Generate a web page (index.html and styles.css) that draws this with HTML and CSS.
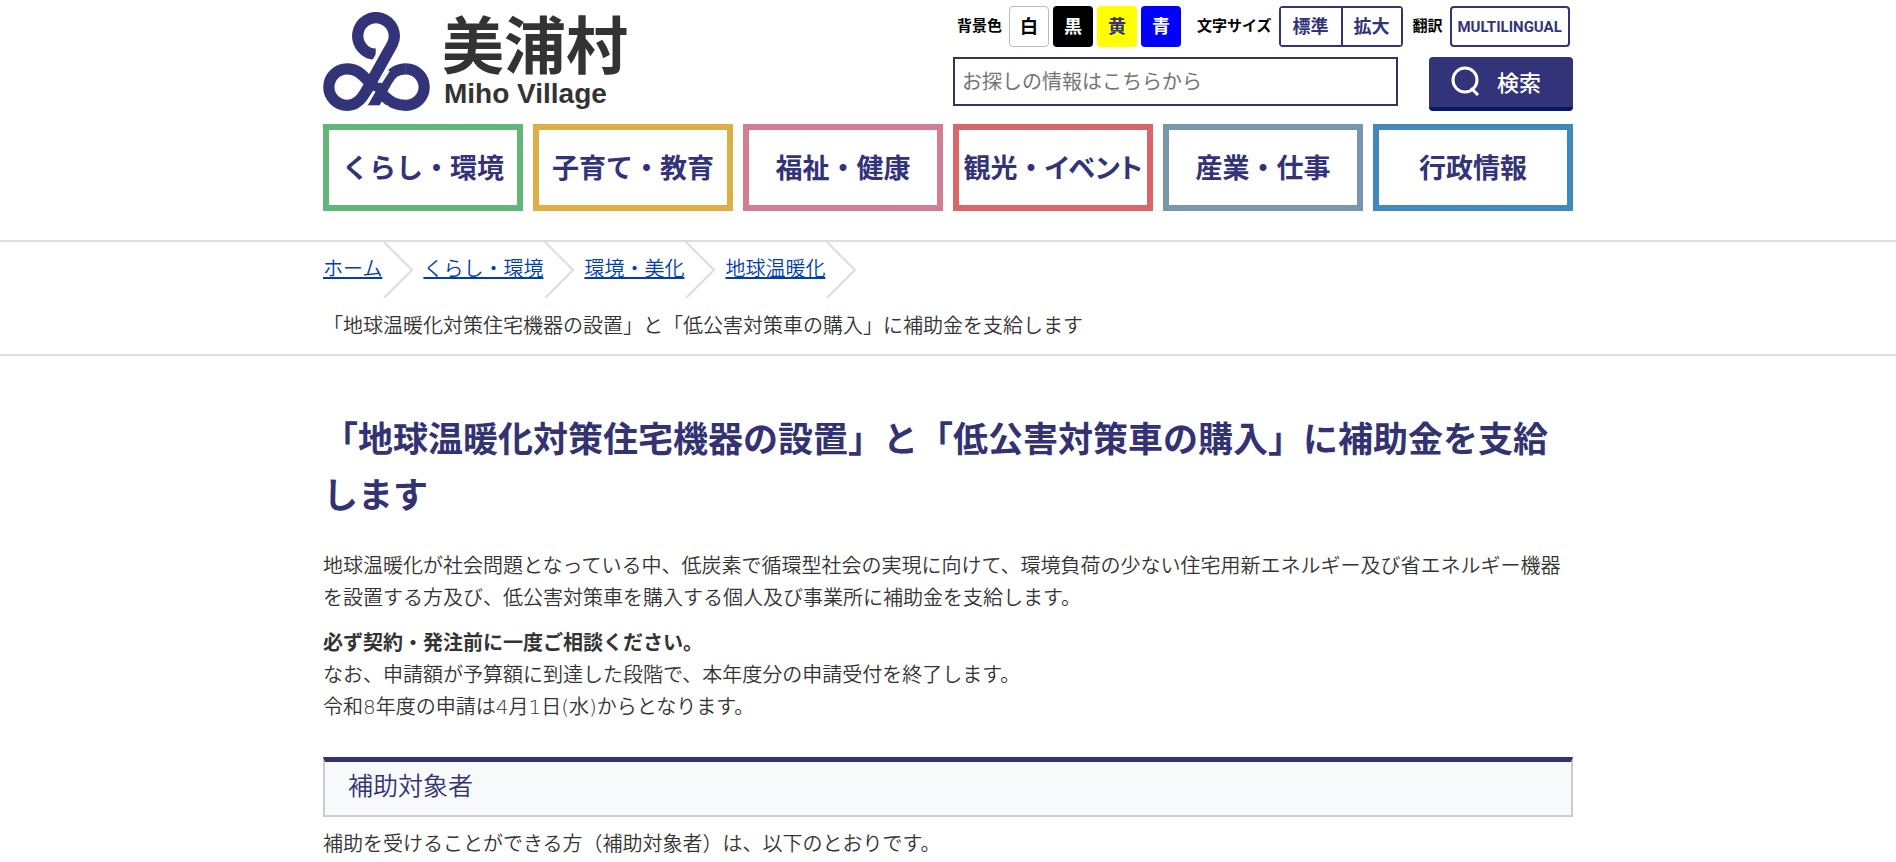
FILE: index.html
```html
<!DOCTYPE html>
<html lang="ja">
<head>
<meta charset="utf-8">
<meta name="viewport" content="width=device-width, initial-scale=1">
<title>「地球温暖化対策住宅機器の設置」と「低公害対策車の購入」に補助金を支給します | 美浦村</title>
<link rel="stylesheet" href="styles.css">
</head>
<body>
<header class="header wrap">
  <div class="header-top">
    <a class="logo" href="#">
      <svg class="logo-mark" viewBox="9 11 321 298" aria-hidden="true">
        <g fill="none" stroke-width="34">
          <path stroke="#33337a" d="M258 182C228 182 214 196 202 216L155 300"/>
          <path stroke="#fff" stroke-width="50" d="M207 122L140 240"/>
          <path stroke="#33337a" d="M167 138A55 55 0 1 1 217 108Q212 118 207 126L141 244C125 272 110 292 81 292A55 55 0 0 1 81 182C112 182 128 202 142 216L190 262C210 282 228 292 258 292A55 55 0 0 0 258 182"/>
          <path stroke="#fff" stroke-width="8" d="M183 119L160 159M206 187L182 224M163 249L140 290"/>
        </g>
        <path fill="#fff" d="M125 292H205V312H125Z"/>
      </svg>
      <span class="logo-text">
        <span class="logo-ja">美浦村</span>
        <span class="logo-en">Miho Village</span>
      </span>
    </a>
    <div class="tools">
      <div class="tool-row">
        <div class="tool-group colors">
          <span class="tool-label">背景色</span>
          <button class="swatch white" type="button">白</button>
          <button class="swatch black" type="button">黒</button>
          <button class="swatch yellow" type="button">黄</button>
          <button class="swatch blue" type="button">青</button>
        </div>
        <div class="tool-group">
          <span class="tool-label">文字サイズ</span>
          <div class="size-switch">
            <button class="size" type="button">標準</button>
            <button class="size" type="button">拡大</button>
          </div>
        </div>
        <div class="tool-group">
          <span class="tool-label">翻訳</span>
          <button class="lang" type="button">MULTILINGUAL</button>
        </div>
      </div>
      <form class="search">
        <input class="search-box" type="text" aria-label="サイト内検索" placeholder="お探しの情報はこちらから">
        <button class="search-button" type="button">
          <svg class="search-icon" viewBox="0 0 30 32" aria-hidden="true"><g fill="none" stroke="#fff" stroke-width="3"><circle cx="14" cy="15" r="12"/><path d="M20 23l7 7"/></g></svg>
          <span>検索</span>
        </button>
      </form>
    </div>
  </div>
  <nav class="nav">
    <a class="nav-item green" href="#">くらし・環境</a>
    <a class="nav-item gold" href="#">子育て・教育</a>
    <a class="nav-item pink" href="#">福祉・健康</a>
    <a class="nav-item red" href="#">観光・<span class="kana">イベント</span></a>
    <a class="nav-item slate" href="#">産業・仕事</a>
    <a class="nav-item sky" href="#">行政情報</a>
  </nav>
</header>
<div class="crumbs">
  <div class="wrap">
    <ol class="crumb-list">
      <li class="crumb"><a href="#">ホーム</a><svg class="arrow" viewBox="0 0 31 56" aria-hidden="true"><path d="M2 0l28 28L2 56"/></svg></li>
      <li class="crumb"><a href="#">くらし・環境</a><svg class="arrow" viewBox="0 0 31 56" aria-hidden="true"><path d="M2 0l28 28L2 56"/></svg></li>
      <li class="crumb"><a href="#">環境・美化</a><svg class="arrow" viewBox="0 0 31 56" aria-hidden="true"><path d="M2 0l28 28L2 56"/></svg></li>
      <li class="crumb"><a href="#">地球温暖化</a><svg class="arrow" viewBox="0 0 31 56" aria-hidden="true"><path d="M2 0l28 28L2 56"/></svg></li>
    </ol>
    <p class="current">「地球温暖化対策住宅機器の設置」と「低公害対策車の購入」に補助金を支給します</p>
  </div>
</div>
<main class="main wrap">
  <h1 class="title">「地球温暖化対策住宅機器の設置」と「低公害対策車の購入」に補助金を支給します</h1>
  <p class="text">地球温暖化が社会問題となっている中、低炭素で循環型社会の実現に向けて、環境負荷の少ない住宅用新エネルギー及び省エネルギー機器を設置する方及び、低公害対策車を購入する個人及び事業所に補助金を支給します。</p>
  <p class="text"><strong>必ず契約・発注前に一度ご相談ください。</strong><br>なお、申請額が予算額に到達した段階で、本年度分の申請受付を終了します。<br>令和8年度の申請は4月1日(水)からとなります。</p>
  <h2 class="section">補助対象者</h2>
  <p class="text">補助を受けることができる方（補助対象者）は、以下のとおりです。</p>
</main>
</body>
</html>
```
FILE: styles.css
```css
* {
  box-sizing: border-box;
}

body {
  margin: 0;
  background: #fff;
  color: #333;
  font: 20px/32px "DejaVu Sans", "Noto Sans CJK JP", sans-serif;
  font-weight: 350;
}

button,
input {
  margin: 0;
  padding: 0;
  font-family: "Noto Sans CJK JP", sans-serif;
}

.wrap {
  max-width: 1250px;
  margin: 0 auto;
}

.header {
  padding: 6px 0 29px;
  font-family: "Noto Sans CJK JP", sans-serif;
}

.header-top {
  display: flex;
  justify-content: space-between;
}

.logo {
  display: flex;
  gap: 12px;
  padding-top: 6px;
  color: #333;
  text-decoration: none;
}

.logo-mark {
  width: 107px;
  height: 99px;
}

.logo-text {
  display: flex;
  flex-direction: column;
  gap: 4px;
  font-weight: bold;
}

.logo-ja {
  font-size: 62px;
  line-height: 60px;
}

.logo-en {
  padding-left: 2px;
  font: bold 28px/36px "Liberation Sans", sans-serif;
}

.tools {
  width: 620px;
}

.tool-row {
  display: flex;
  gap: 10px;
  padding-left: 4px;
}

.tool-group {
  display: flex;
  align-items: center;
  gap: 4px;
}

.colors {
  margin-right: 6px;
}

.tool-label {
  margin-right: 3px;
  padding-bottom: 4px;
  color: #000;
  font-size: 15px;
  font-weight: bold;
  line-height: 36px;
}

.swatch {
  width: 40px;
  height: 41px;
  padding-bottom: 3px;
  border: 0;
  border-radius: 4px;
  font-size: 18px;
  font-weight: bold;
}

.white {
  border: 1px solid #bbb;
  background: #fff;
  color: #000;
}

.black {
  background: #000;
  color: #fff;
}

.yellow {
  background: #ff0;
  color: #33337a;
}

.blue {
  background: #00f;
  color: #fff;
}

.size-switch {
  display: flex;
  border: 2px solid #33337a;
  border-radius: 4px;
}

.size {
  width: 60px;
  height: 37px;
  padding-bottom: 3px;
  border: 0;
  background: #fff;
  color: #33337a;
  font-size: 18px;
  font-weight: bold;
}

.size + .size {
  border-left: 2px solid #33337a;
}

.lang {
  width: 120px;
  height: 41px;
  border: 2px solid #33337a;
  border-radius: 4px;
  background: #fff;
  color: #33337a;
  font: bold 15px Roboto, sans-serif;
}

.search {
  display: flex;
  align-items: flex-start;
  justify-content: space-between;
  margin-top: 10px;
}

.search-box {
  width: 445px;
  height: 49px;
  padding: 0 7px 2px;
  border: 2px solid #33336a;
  background: #fff;
  color: #333;
  font-size: 20px;
}

.search-box::placeholder {
  color: #757575;
}

.search-button {
  display: flex;
  align-items: center;
  justify-content: center;
  gap: 16px;
  width: 144px;
  height: 54px;
  padding: 0 10px 2px 0;
  border: 0;
  border-bottom: 4px solid #001a66;
  border-radius: 4px;
  background: #33337a;
  color: #fff;
  font-size: 22px;
  font-weight: 500;
}

.search-icon {
  width: 30px;
  height: 32px;
}

.nav {
  display: grid;
  grid-template-columns: repeat(6, 1fr);
  gap: 10px;
  margin-top: 12px;
}

.nav-item {
  padding: 19px 0 20px;
  border: 6px solid;
  color: #33337a;
  font-size: 27px;
  font-weight: bold;
  line-height: 36px;
  text-align: center;
  text-decoration: none;
  white-space: nowrap;
}

.kana {
  font-feature-settings: "palt";
}

.green { border-color: #63b67a; }
.gold { border-color: #e0ae47; }
.pink { border-color: #d17e92; }
.red { border-color: #da656b; }
.slate { border-color: #7996ad; }
.sky { border-color: #4189bc; }

.crumbs {
  border-top: 2px solid #ddd;
  border-bottom: 2px solid #ddd;
}

.crumb-list {
  display: flex;
  flex-wrap: wrap;
  gap: 10px;
  margin: 0;
  padding: 0;
  list-style: none;
}

.crumb {
  display: flex;
  align-items: flex-start;
}

.crumb a {
  padding-top: 11px;
  color: #003eb0;
  text-decoration-thickness: 2px;
}

.arrow {
  width: 31px;
  height: 56px;
  fill: none;
  stroke: #ddd;
  stroke-width: 2;
}

.current {
  margin: 0;
  padding: 12px 0;
}

.main {
  padding-top: 56px;
}

.title {
  margin: 0 0 26px;
  color: #333373;
  font-size: 35px;
  font-weight: bold;
  line-height: 56px;
}

.text {
  margin: 0 0 13px;
}

.text strong {
  font-weight: bold;
}

.section {
  margin: 34px 0 11px;
  padding: 7px 23px 10px;
  border: 2px solid #ccc;
  border-top: 5px solid #333373;
  background: #f7f9fb;
  color: #333373;
  font-size: 25px;
  font-weight: 350;
  line-height: 36px;
}
```
